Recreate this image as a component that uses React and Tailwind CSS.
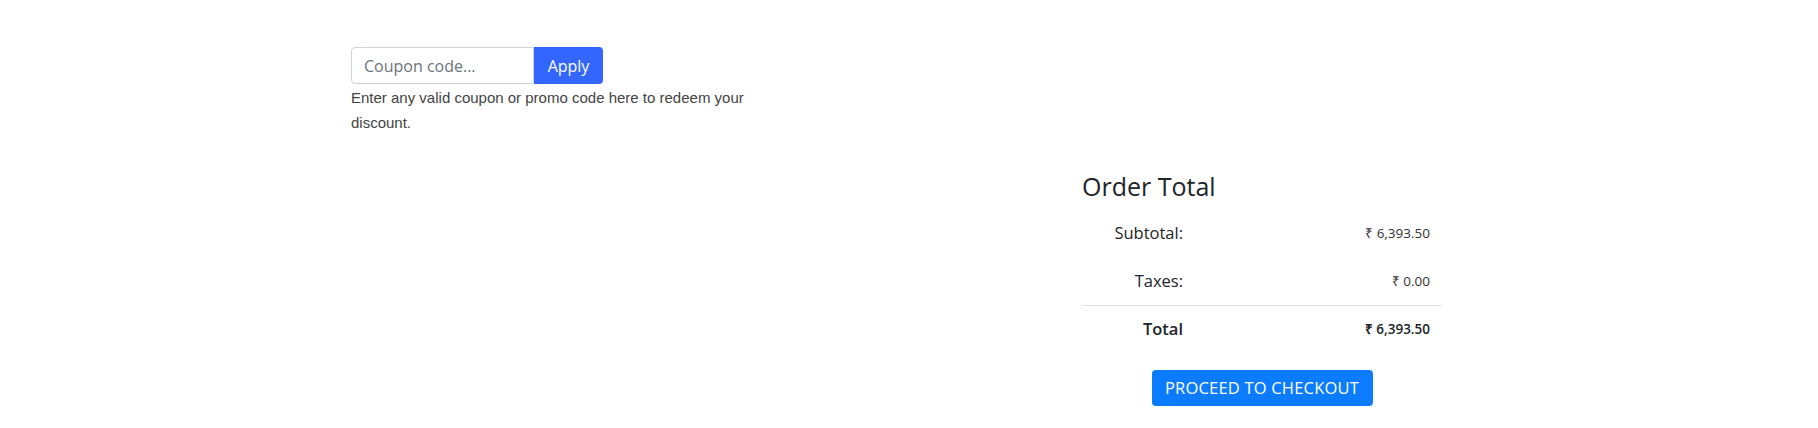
export default function App() {
    return (
        <main className="min-h-screen bg-white font-['Open_Sans',sans-serif] text-[#212529]">
            <div className="mx-auto w-[1140px] px-3 pt-[47px]">
                <section className="w-[420px]">
                    <div className="flex h-[37px] w-[252px]">
                        <input
                            type="text"
                            placeholder="Coupon code..."
                            className="h-full w-[183px] rounded-l-[4px] border border-[#ced4da] px-3 text-[16px] text-[#495057] placeholder:text-[#6c757d] outline-none"
                        />
                        <button className="h-full w-[69px] rounded-r-[4px] bg-[#3366ff] text-[16px] text-white">
                            Apply
                        </button>
                    </div>
                    <p className="pt-px font-['Liberation_Sans',sans-serif] text-[15px] leading-[25px] text-[#444]">
                        Enter any valid coupon or promo code here to redeem your discount.
                    </p>
                </section>

                <section className="ml-[731px] mt-[36px] w-[360px]">
                    <h3 className="text-[25px] font-normal leading-[30px]">Order Total</h3>
                    <div className="mt-[8px] grid grid-cols-[113px_1fr] text-[#333]">
                        <div className="flex h-[48px] items-center justify-end px-3 text-[16.5px] text-[#212529]">Subtotal:</div>
                        <div className="flex h-[48px] items-center justify-end px-3 text-[13.5px]">₹ 6,393.50</div>
                        <div className="flex h-[48px] items-center justify-end px-3 text-[16.5px] text-[#212529]">Taxes:</div>
                        <div className="flex h-[48px] items-center justify-end px-3 text-[13.5px]">₹ 0.00</div>
                        <div className="col-span-2 h-px bg-[#dee2e6]" />
                        <div className="flex h-[47px] items-center justify-end px-3 text-[16.5px] font-semibold text-[#212529]">Total</div>
                        <div className="flex h-[47px] items-center justify-end px-3 text-[13.5px] font-semibold text-[#212529]">₹ 6,393.50</div>
                    </div>
                    <div className="mt-[17px] flex justify-center">
                        <button className="h-[36px] w-[221px] rounded-[4px] bg-[#0b7bff] text-[16.5px] uppercase tracking-[0.2px] text-white">
                            Proceed to checkout
                        </button>
                    </div>
                </section>
            </div>
        </main>
    );
}
